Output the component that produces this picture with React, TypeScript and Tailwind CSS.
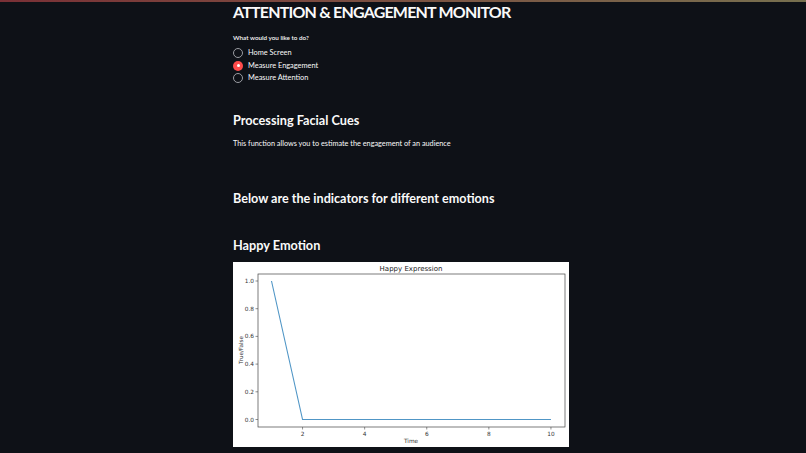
import type { FC } from 'react';

const options = ['Home Screen', 'Measure Engagement', 'Measure Attention'];

// matplotlib-ish geometry, measured off the screenshot (image is 336x185)
const ax = { left: 25, right: 332, top: 12, bottom: 165 };
const xPos = (v: number) => 38.5 + (v - 1) * 31.05;
const yPos = (v: number) => 157.5 - v * 138.5;

const HappyChart: FC = () => (
  <svg viewBox="0 0 336 185" className="block w-[336px] h-[185px] bg-white" fontFamily="'DejaVu Sans', sans-serif">
    <text x={178} y={9} fontSize={7} textAnchor="middle" fill="#222">Happy Expression</text>
    <rect x={ax.left} y={ax.top} width={ax.right - ax.left} height={ax.bottom - ax.top} fill="none" stroke="#444" strokeWidth={0.7} />
    {[0, 0.2, 0.4, 0.6, 0.8, 1.0].map((v) => (
      <g key={v}>
        <line x1={ax.left - 2.5} x2={ax.left} y1={yPos(v)} y2={yPos(v)} stroke="#444" strokeWidth={0.6} />
        <text x={ax.left - 4} y={yPos(v) + 2} fontSize={5.8} textAnchor="end" fill="#333">{v.toFixed(1)}</text>
      </g>
    ))}
    {[2, 4, 6, 8, 10].map((v) => (
      <g key={v}>
        <line x1={xPos(v)} x2={xPos(v)} y1={ax.bottom} y2={ax.bottom + 2.5} stroke="#444" strokeWidth={0.6} />
        <text x={xPos(v)} y={ax.bottom + 9} fontSize={5.8} textAnchor="middle" fill="#333">{v}</text>
      </g>
    ))}
    <polyline points={`${xPos(1)},${yPos(1)} ${xPos(2)},${yPos(0)} ${xPos(10)},${yPos(0)}`} fill="none" stroke="#5096c6" strokeWidth={1.1} />
    <text x={178} y={180.5} fontSize={5.8} textAnchor="middle" fill="#333">Time</text>
    <text x={0} y={0} fontSize={5.6} textAnchor="middle" fill="#333" transform="translate(9.5 88) rotate(-90)">True/False</text>
  </svg>
);

const App: FC = () => {
  const selected = 'Measure Engagement';

  return (
    <div className="min-h-screen bg-[#0e1117] text-[#fafafa] font-['Lato',sans-serif]">
      <div className="h-[2px] bg-gradient-to-r from-[#7a3036] to-[#77704f]" />
      <div className="ml-[233px] w-[336px]">
        <h1 className="whitespace-nowrap text-[16px] leading-[20px] font-bold tracking-[-0.8px]">ATTENTION &amp; ENGAGEMENT MONITOR</h1>

        <p className="mt-[11px] text-[6.3px] leading-[10px] font-semibold">What would you like to do?</p>
        <div className="mt-[4px] flex flex-col">
          {options.map((o) => (
            <label key={o} className="flex items-center gap-[5px] h-[12.5px]">
              {o === selected ? (
                <span className="w-[10px] h-[10px] rounded-full bg-[#ff4b4b] flex items-center justify-center">
                  <span className="w-[3px] h-[3px] rounded-full bg-white" />
                </span>
              ) : (
                <span className="w-[10px] h-[10px] rounded-full border border-[#9a9ca2]" />
              )}
              <span className="text-[7.4px] leading-[10px]">{o}</span>
            </label>
          ))}
        </div>

        <h2 className="mt-[27px] text-[12.7px] leading-[16px] font-bold">Processing Facial Cues</h2>
        <p className="mt-[11px] text-[7.3px] leading-[10px]">This function allows you to estimate the engagement of an audience</p>

        <h2 className="mt-[42.5px] text-[12.6px] leading-[16px] font-bold">Below are the indicators for different emotions</h2>

        <h3 className="mt-[30px] text-[12.7px] leading-[16px] font-bold">Happy Emotion</h3>

        <div className="mt-[8.5px]">
          <HappyChart />
        </div>
      </div>
    </div>
  );
};

export default App;
